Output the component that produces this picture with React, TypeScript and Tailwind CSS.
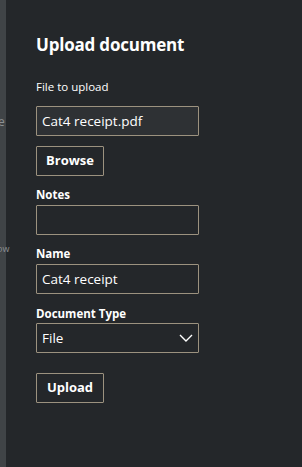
import React from "react";

const font = { fontFamily: '"Open Sans", "Noto Sans", sans-serif' };

export default function App() {
  return (
    <div className="flex h-[467px] w-[302px] overflow-hidden bg-[#24272a] text-white" style={font}>
      <div className="relative w-[6px] shrink-0 bg-[#404447] text-[12px] text-[#8c8f92]">
        <span className="absolute left-[-2px] top-[113px]">e</span>
        <span className="absolute left-[-3px] top-[242px] text-[9px]">ow</span>
      </div>
      <div className="flex flex-1 flex-col pl-[30px] pt-[33px]">
        <h1 className="text-[17px] font-bold leading-[24px] tracking-[-0.2px]">Upload document</h1>
        <label className="mt-[22px] text-[11.5px] leading-[16px]">File to upload</label>
        <div className="mt-[11px] flex h-[30px] w-[163px] items-center rounded-[1px] border border-[#9c927f] bg-[#2e3134] px-[5px] text-[13.5px]">
          Cat4 receipt.pdf
        </div>
        <button className="mt-[10px] flex h-[30px] w-[68px] items-center justify-center rounded-[1px] border border-[#9c927f] text-[13px] font-bold">
          Browse
        </button>
        <label className="mt-[11px] text-[11.5px] font-bold leading-[16px]">Notes</label>
        <div className="mt-[2px] h-[30px] w-[163px] rounded-[1px] border border-[#9c927f]" />
        <label className="mt-[11px] text-[11.5px] font-bold leading-[16px]">Name</label>
        <div className="mt-[2px] flex h-[30px] w-[163px] items-center rounded-[1px] border border-[#9c927f] px-[5px] text-[13.5px]">
          Cat4 receipt
        </div>
        <label className="mt-[12px] text-[11.5px] font-bold leading-[16px]">Document Type</label>
        <div className="mt-[1px] flex h-[30px] w-[163px] items-center justify-between rounded-[1px] border border-[#9c927f] pl-[5px] pr-[5px] text-[13.5px]">
          <span>File</span>
          <svg width="14" height="8" viewBox="0 0 14 8" fill="none">
            <path d="M1 1l6 6 6-6" stroke="white" strokeWidth="1.4" />
          </svg>
        </div>
        <button className="mt-[20px] flex h-[30px] w-[68px] items-center justify-center rounded-[1px] border border-[#9c927f] text-[13px] font-bold">
          Upload
        </button>
      </div>
    </div>
  );
}
